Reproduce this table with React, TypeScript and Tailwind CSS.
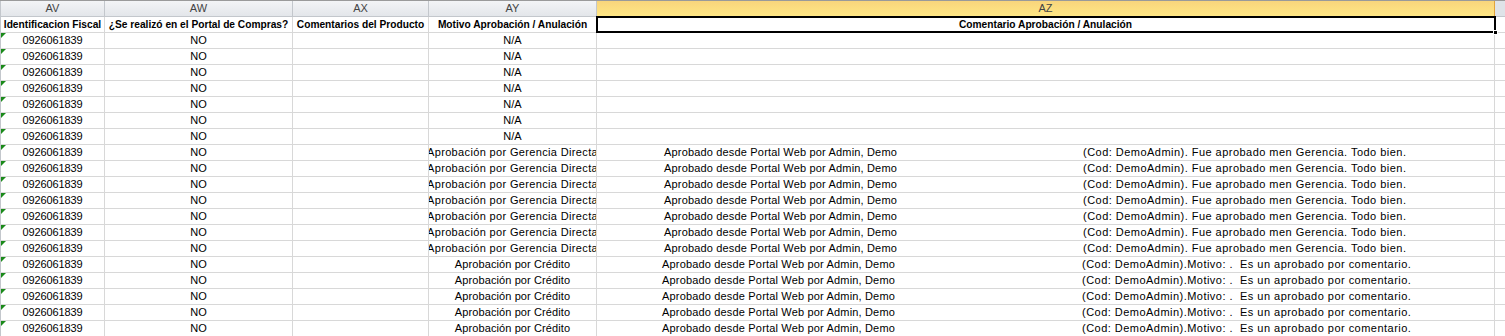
import React from "react";

const FONT = { fontFamily: '"Liberation Sans", Arial, sans-serif' };

type Row = { ay: string; az?: [string, string]; kind: "na" | "ger" | "cred" };

const rows: Row[] = [
  ...Array.from({ length: 7 }, () => ({ ay: "N/A", kind: "na" as const })),
  ...Array.from({ length: 7 }, () => ({
    ay: "Aprobación por Gerencia Directa",
    az: ["Aprobado desde Portal Web por Admin, Demo", "(Cod: DemoAdmin). Fue aprobado men Gerencia. Todo bien."] as [string, string],
    kind: "ger" as const,
  })),
  ...Array.from({ length: 5 }, () => ({
    ay: "Aprobación por Crédito",
    az: ["Aprobado desde Portal Web por Admin, Demo", "(Cod: DemoAdmin).Motivo: .  Es un aprobado por comentario."] as [string, string],
    kind: "cred" as const,
  })),
];

function GreenTri() {
  return (
    <svg className="absolute left-0 top-0" width="5" height="5" viewBox="0 0 5 5">
      <polygon points="0,0 5,0 0,5" fill="#1a8a1a" />
    </svg>
  );
}

const base =
  "h-4 border-b border-r border-[#d8d8d8] flex items-center justify-center overflow-hidden whitespace-nowrap leading-[15px] text-black";
const cell = `${base} text-[11px]`;
const hcell = `${base} font-bold text-[10.2px]`;
const colHead =
  "h-4 flex items-center justify-center border-r border-b border-[#c3c7cc] bg-gradient-to-b from-[#f3f4f6] to-[#e3e6ea] text-[11px] text-[#444]";

export default function App() {
  return (
    <div className="w-[1505px] h-[336px] overflow-hidden bg-white" style={FONT}>
      {/* column letters */}
      <div className="flex h-[17px] border-t border-[#9a9a9a]">
        <div className={`${colHead} w-[105px] border-l`}>AV</div>
        <div className={`${colHead} w-[188px]`}>AW</div>
        <div className={`${colHead} w-[136px]`}>AX</div>
        <div className={`${colHead} w-[168px]`}>AY</div>
        <div className="w-[898px] h-4 flex items-center justify-center border-r border-b border-[#e2a43c] bg-gradient-to-b from-[#f9d57c] to-[#ffe785] text-[11px] text-[#444]">
          AZ
        </div>
        <div className="flex-1 h-4 border-b border-[#c3c7cc] bg-[#dfe3e8]" />
      </div>

      {/* header row */}
      <div className="flex">
        <div className={`${hcell} w-[105px] border-l border-l-[#c3c7cc]`}>Identificacion Fiscal</div>
        <div className={`${hcell} w-[188px]`}>¿Se realizó en el Portal de Compras?</div>
        <div className={`${hcell} w-[136px]`}>Comentarios del Producto</div>
        <div className={`${hcell} w-[168px]`}>Motivo Aprobación / Anulación</div>
        <div className={`${hcell} w-[898px] relative overflow-visible`}>
          <span>Comentario Aprobación / Anulación</span>
          <div className="absolute -left-px -top-px -right-[2px] -bottom-px border-2 border-black pointer-events-none" />
          <div className="absolute -right-[4px] -bottom-[3px] w-[5px] h-[5px] bg-black border border-white" />
        </div>
        <div className={`${cell} flex-1 border-r-0`} />
      </div>

      {rows.map((r, i) => (
        <div key={i} className="flex">
          <div className={`${cell} w-[105px] border-l border-l-[#c3c7cc] relative tracking-[-0.1px]`}>
            <GreenTri />
            0926061839
          </div>
          <div className={`${cell} w-[188px]`}>NO</div>
          <div className={`${cell} w-[136px]`} />
          <div className={`${cell} w-[168px] ${r.kind === "ger" ? "tracking-[0.35px]" : "tracking-[0.1px]"}`}>{r.ay}</div>
          <div className={`${cell} w-[898px] !justify-start`}>
            {r.az && (
              <>
                <span
                  className={
                    r.kind === "ger"
                      ? "w-[486px] shrink-0 pl-[67px] tracking-[0.17px]"
                      : "w-[485px] shrink-0 pl-[65px] tracking-[0.17px]"
                  }
                >
                  {r.az[0]}
                </span>
                <span className="whitespace-pre tracking-[0.47px]">{r.az[1]}</span>
              </>
            )}
          </div>
          <div className={`${cell} flex-1 border-r-0`} />
        </div>
      ))}
    </div>
  );
}
